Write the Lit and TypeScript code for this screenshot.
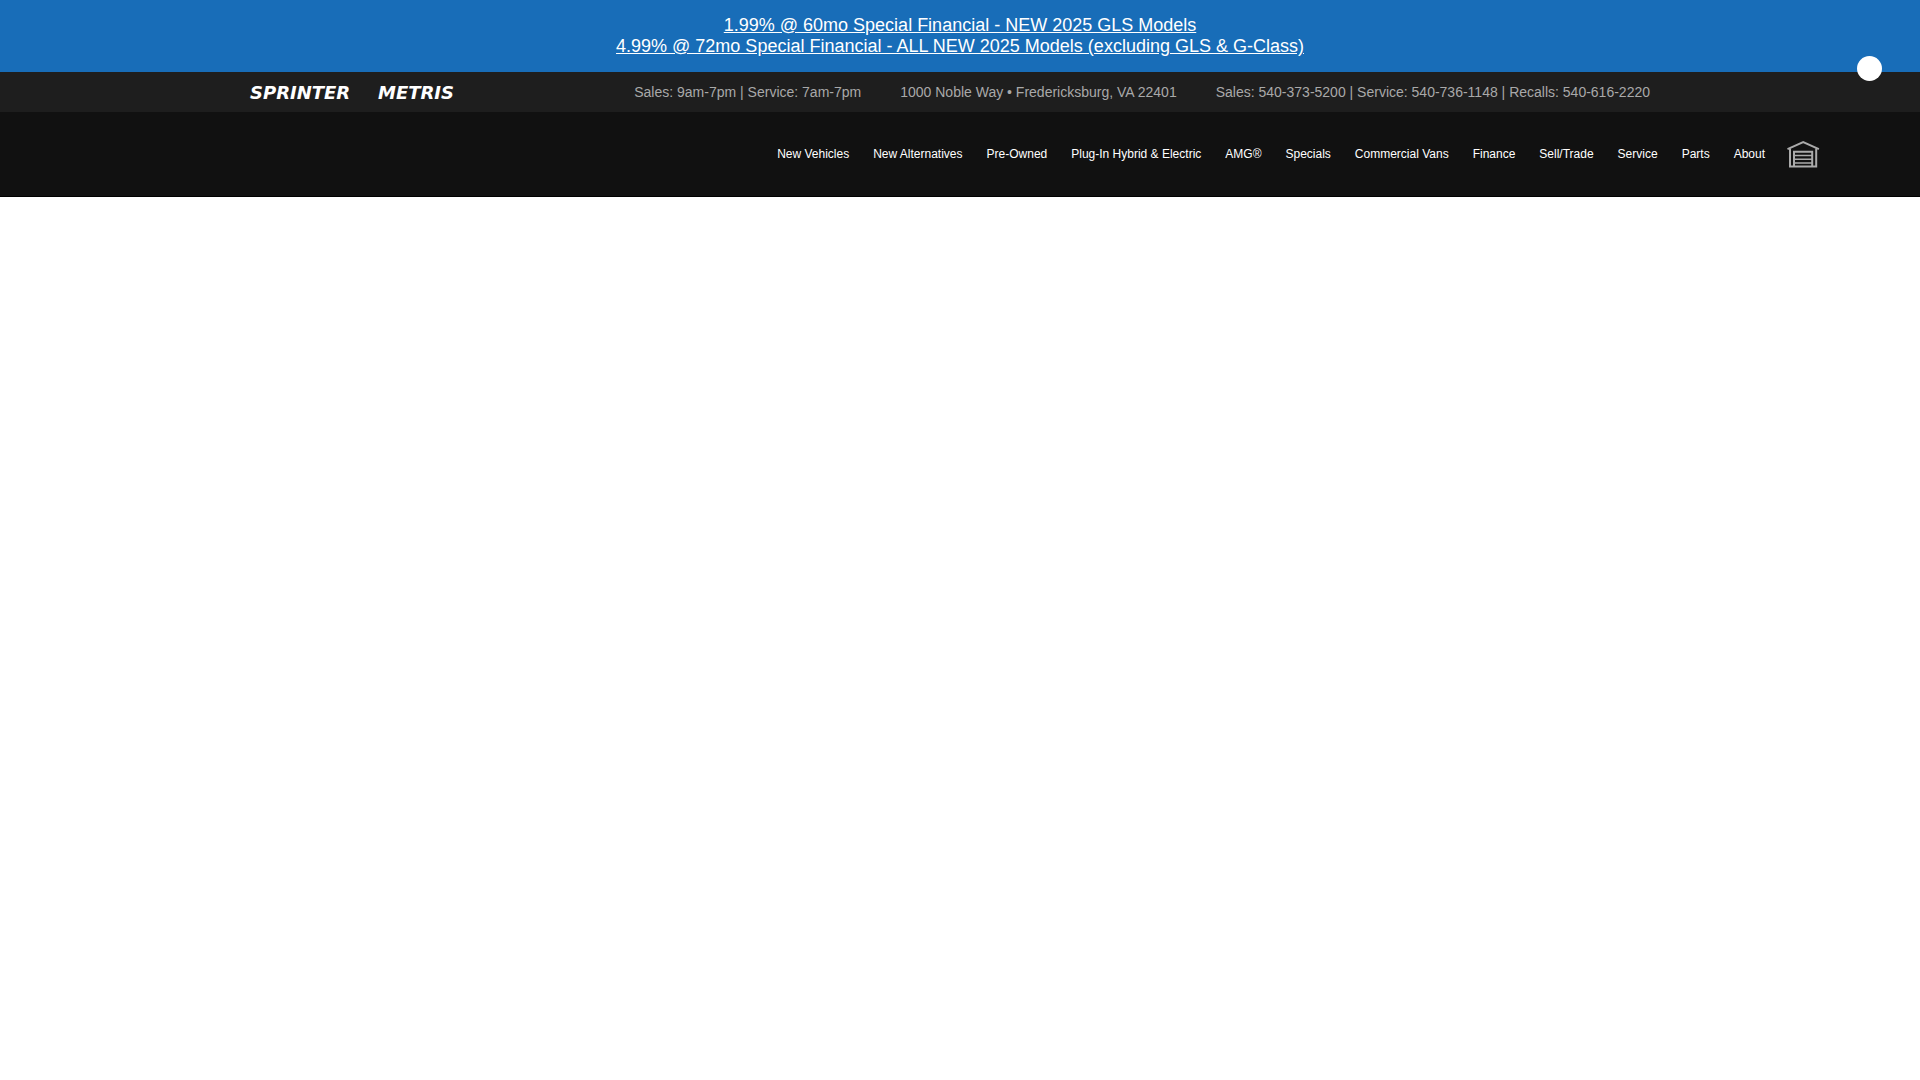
import { LitElement, html, css } from "lit";
import { customElement } from "lit/decorators.js";

const NAV = [
  "New Vehicles",
  "New Alternatives",
  "Pre-Owned",
  "Plug-In Hybrid & Electric",
  "AMG®",
  "Specials",
  "Commercial Vans",
  "Finance",
  "Sell/Trade",
  "Service",
  "Parts",
  "About",
];

@customElement("app-root")
export class AppRoot extends LitElement {
  static styles = css`
    :host {
      display: block;
      min-height: 100vh;
      background: #fff;
      font-family: "Liberation Sans", Arial, sans-serif;
    }
    a {
      color: inherit;
      text-decoration: none;
    }
    .promo {
      position: relative;
      display: flex;
      flex-direction: column;
      align-items: center;
      padding: 15px 0;
      background: #186db8;
      color: #fff;
      font-size: 18px;
      line-height: 21px;
    }
    .promo a {
      text-decoration: underline;
    }
    .close {
      position: absolute;
      right: 38px;
      bottom: -9px;
      width: 25px;
      height: 25px;
      padding: 0;
      border: 0;
      border-radius: 50%;
      background: #fff;
    }
    .topbar {
      display: flex;
      justify-content: space-between;
      align-items: center;
      height: 40px;
      padding: 0 270px 0 250px;
      background: #1e1e1e;
      color: #a9a9a9;
      font-size: 14px;
      line-height: 20px;
      white-space: nowrap;
    }
    .brands {
      display: grid;
      grid-template-columns: 128px auto;
      padding-top: 2px;
      color: #fff;
      font: italic bold 18px/20px "DejaVu Sans", Verdana, sans-serif;
    }
    .info {
      display: flex;
      gap: 39px;
    }
    .mainbar {
      display: flex;
      justify-content: flex-end;
      align-items: center;
      gap: 22px;
      height: 84px;
      padding-right: 100px;
      border-bottom: 1px solid #000;
      background: #111;
    }
    .nav {
      display: flex;
      gap: 24px;
      color: #fff;
      font-size: 12px;
      line-height: 16px;
      white-space: nowrap;
    }
    .garage {
      display: block;
      width: 33px;
      height: 28px;
    }
    .garage svg {
      display: block;
    }
  `;

  render() {
    return html`
      <header>
        <div class="promo">
          <a href="#gls">1.99% @ 60mo Special Financial - NEW 2025 GLS Models</a>
          <a href="#all">4.99% @ 72mo Special Financial - ALL NEW 2025 Models (excluding GLS &amp; G-Class)</a>
          <button class="close" type="button" aria-label="Close"></button>
        </div>
        <div class="topbar">
          <div class="brands">
            <a href="#sprinter">SPRINTER</a>
            <a href="#metris">METRIS</a>
          </div>
          <div class="info">
            <span>Sales: 9am-7pm | Service: 7am-7pm</span>
            <span>1000 Noble Way • Fredericksburg, VA 22401</span>
            <span>Sales: 540-373-5200 | Service: 540-736-1148 | Recalls: 540-616-2220</span>
          </div>
        </div>
        <div class="mainbar">
          <nav class="nav">
            ${NAV.map((label) => html`<a href="#">${label}</a>`)}
          </nav>
          <a class="garage" href="#garage" aria-label="Garage">
            <svg width="33" height="28" viewBox="0 0 33 28" fill="none" stroke="#aaa">
              <path d="M.5 9.2 16.2 2 31.9 9.2" stroke-width="2" />
              <path d="M3 8.4V26.6H29.2V8.4" stroke-width="2" />
              <path d="M7 26V11.8H25.2V26" stroke-width="2" />
              <path d="M7.5 15.6H25M7.5 19.2H25M7.5 22.9H25" stroke-width="1.5" />
            </svg>
          </a>
        </div>
      </header>
    `;
  }
}
